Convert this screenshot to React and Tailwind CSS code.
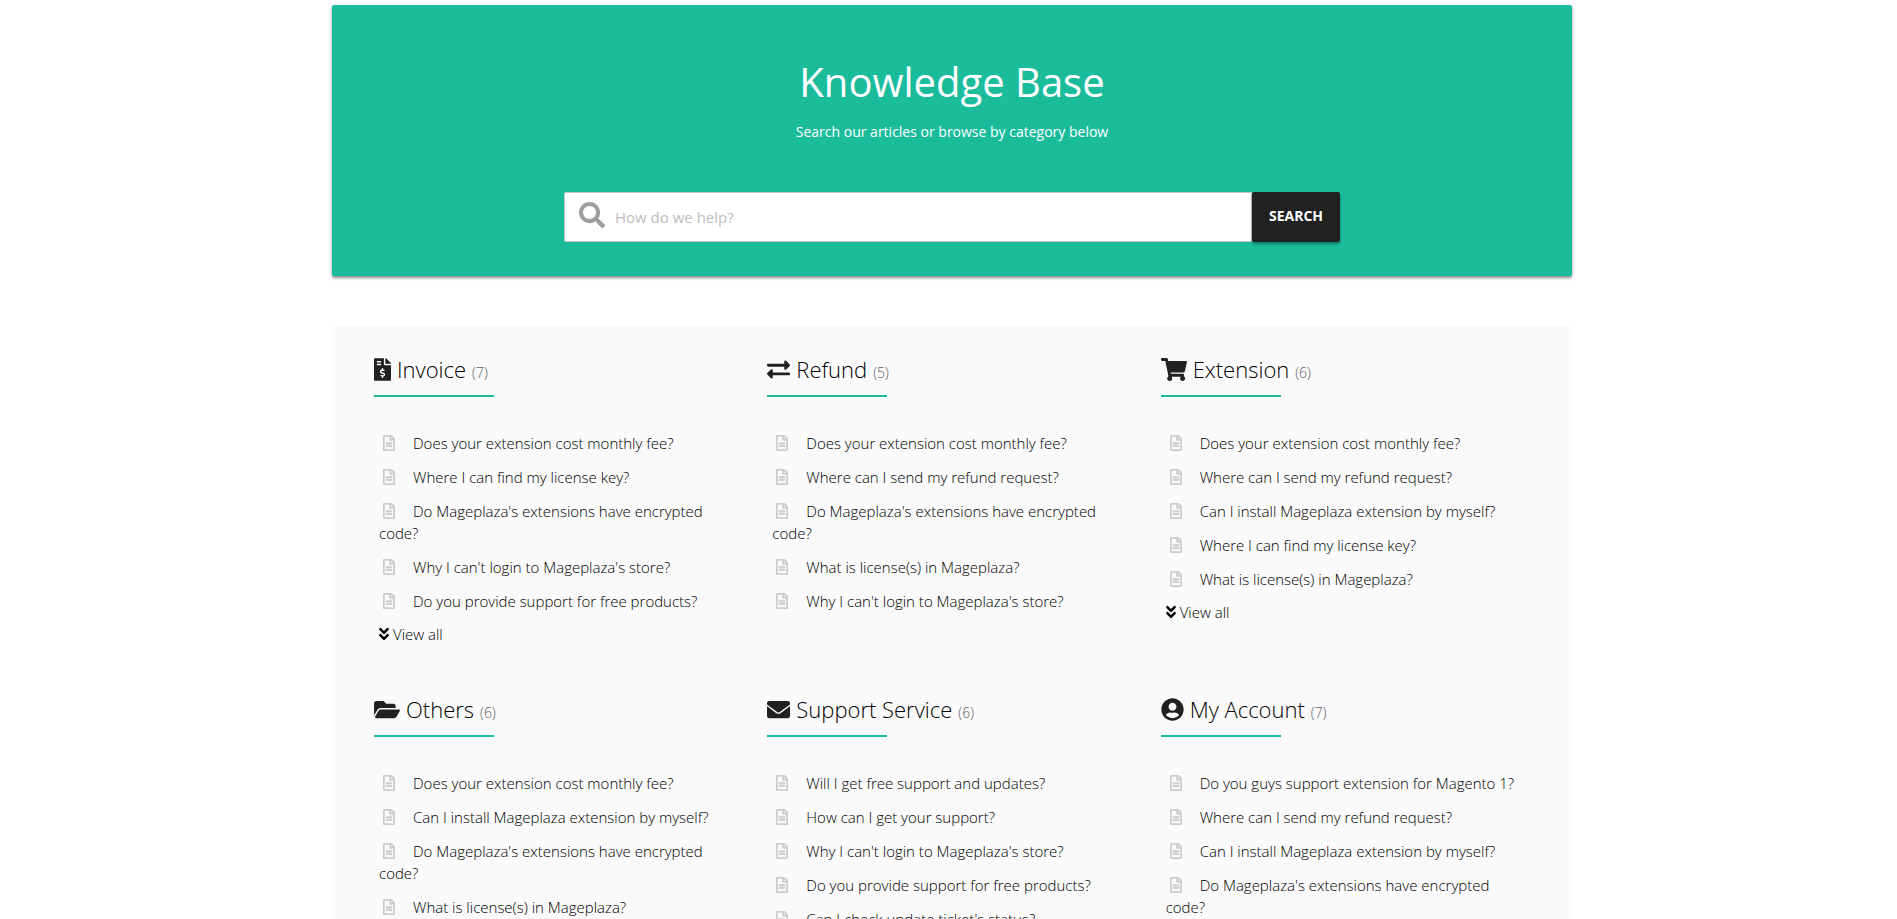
import { useState } from "react";
import {
  FaSearch,
  FaFileInvoiceDollar,
  FaExchangeAlt,
  FaShoppingCart,
  FaFolderOpen,
  FaEnvelope,
  FaUserCircle,
  FaRegFileAlt,
  FaAngleDoubleDown,
} from "react-icons/fa";

const categories = [
  {
    name: "Invoice",
    count: 7,
    icon: FaFileInvoiceDollar,
    iconWidth: "w-[17px]",
    articles: [
      "Does your extension cost monthly fee?",
      "Where I can find my license key?",
      "Do Mageplaza's extensions have encrypted code?",
      "Why I can't login to Mageplaza's store?",
      "Do you provide support for free products?",
    ],
  },
  {
    name: "Refund",
    count: 5,
    icon: FaExchangeAlt,
    iconWidth: "w-[23px]",
    articles: [
      "Does your extension cost monthly fee?",
      "Where can I send my refund request?",
      "Do Mageplaza's extensions have encrypted code?",
      "What is license(s) in Mageplaza?",
      "Why I can't login to Mageplaza's store?",
    ],
  },
  {
    name: "Extension",
    count: 6,
    icon: FaShoppingCart,
    iconWidth: "w-[26px]",
    articles: [
      "Does your extension cost monthly fee?",
      "Where can I send my refund request?",
      "Can I install Mageplaza extension by myself?",
      "Where I can find my license key?",
      "What is license(s) in Mageplaza?",
    ],
  },
  {
    name: "Others",
    count: 6,
    icon: FaFolderOpen,
    iconWidth: "w-[26px]",
    articles: [
      "Does your extension cost monthly fee?",
      "Can I install Mageplaza extension by myself?",
      "Do Mageplaza's extensions have encrypted code?",
      "What is license(s) in Mageplaza?",
    ],
  },
  {
    name: "Support Service",
    count: 6,
    icon: FaEnvelope,
    iconWidth: "w-[23px]",
    articles: [
      "Will I get free support and updates?",
      "How can I get your support?",
      "Why I can't login to Mageplaza's store?",
      "Do you provide support for free products?",
      "Can I check update ticket's status?",
    ],
  },
  {
    name: "My Account",
    count: 7,
    icon: FaUserCircle,
    iconWidth: "w-[23px]",
    articles: [
      "Do you guys support extension for Magento 1?",
      "Where can I send my refund request?",
      "Can I install Mageplaza extension by myself?",
      "Do Mageplaza's extensions have encrypted code?",
    ],
  },
];

function Category({ name, count, icon: Icon, iconWidth, articles }) {
  return (
    <section className="px-3 pb-[41px]">
      <h2 className="flex h-9 items-center text-[22px] font-[350] leading-8">
        <Icon className={`mr-1.5 h-[23px] shrink-0 ${iconWidth}`} />
        <a href="#" className="flex items-baseline gap-1.5 pt-1 text-black">
          {name}
          <span className="text-[14px] font-light text-[#616161]">
            ({count})
          </span>
        </a>
      </h2>
      <div className="mt-2 h-0.5 w-[120px] bg-[#1abc9c]" />

      <ul className="mt-[29px] pr-3 pl-[5px] text-[15px] font-light leading-[22px] text-black">
        {articles.map((title) => (
          <li key={title} className="py-1.5">
            <a href="#">
              <FaRegFileAlt
                strokeWidth={16}
                className="mr-[18px] ml-1 inline-block h-4 w-3 align-[-2px] text-[#cccccc]"
              />
              {title}
            </a>
          </li>
        ))}
      </ul>

      {count > 5 && (
        <a
          href="#"
          className="flex items-center gap-1 px-[5px] py-[5px] text-[15px] font-light leading-[22px] text-black"
        >
          <FaAngleDoubleDown className="h-4 w-[10px]" />
          View all
        </a>
      )}
    </section>
  );
}

export default function App() {
  const [query, setQuery] = useState("");

  return (
    <div className="h-screen overflow-hidden bg-white pt-[5px] pl-[7px] font-['Open_Sans',sans-serif] text-[#212121]">
      <div className="mx-auto max-w-[1240px]">
        <header className="rounded-xs bg-[#1abc9c] px-4 pt-[49px] pb-[34px] text-center text-white shadow-[0_2px_3px_rgba(0,0,0,0.45)]">
          <h1 className="text-[40px] leading-[56px]">Knowledge Base</h1>
          <p className="mt-2.5 text-sm leading-6">
            Search our articles or browse by category below
          </p>

          <form
            onSubmit={(e) => e.preventDefault()}
            className="mx-auto mt-12 flex h-[50px] w-full max-w-[776px]"
          >
            <label
              htmlFor="kb-search"
              className="flex flex-1 items-center gap-2.5 rounded-l-xs border border-[#c6c6c6] bg-white pl-3.5"
            >
              <FaSearch className="mb-1 h-[26px] w-[26px] shrink-0 text-[#9e9e9e]" />
              <input
                id="kb-search"
                type="text"
                aria-label="Search articles"
                value={query}
                onChange={(e) => setQuery(e.target.value)}
                placeholder="How do we help?"
                className="h-full w-full text-[15px] text-[#212121] outline-none placeholder:text-[#bdbdbd]"
              />
            </label>
            <button
              type="submit"
              className="w-[88px] rounded-xs bg-[#212121] pb-0.5 text-sm font-bold text-white shadow-[0_2px_3px_rgba(0,0,0,0.35)]"
            >
              SEARCH
            </button>
          </form>
        </header>

        <main className="mt-[50px] grid grid-cols-1 bg-[#fafafa] px-[30px] pt-[25px] sm:grid-cols-2 lg:grid-cols-3">
          {categories.map((category) => (
            <Category key={category.name} {...category} />
          ))}
        </main>
      </div>
    </div>
  );
}
